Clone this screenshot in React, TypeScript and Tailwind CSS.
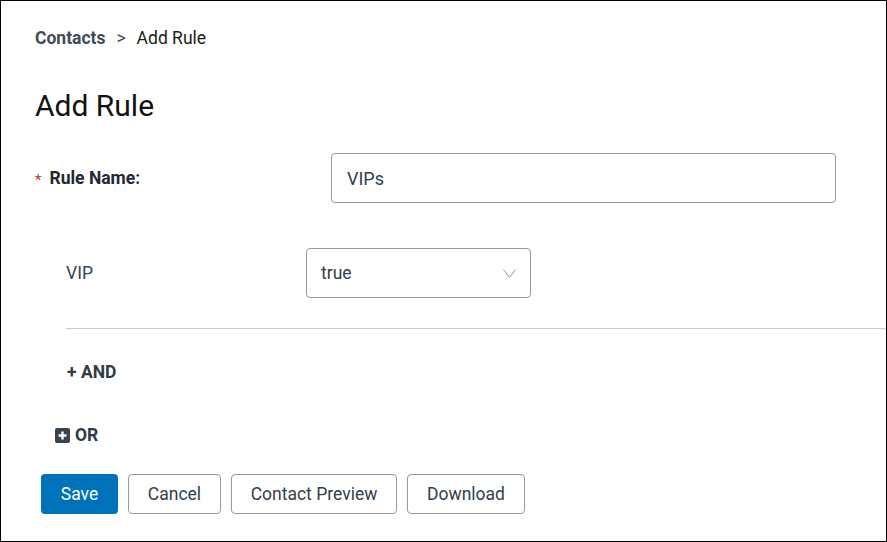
import React from 'react';

const font = { fontFamily: 'Roboto, "Liberation Sans", sans-serif' };

const PlusSquare = () => (
  <svg width="15" height="15" viewBox="0 0 15 15" aria-hidden="true">
    <rect x="0" y="0" width="15" height="15" rx="2" fill="#37434d" />
    <path d="M7.5 3.5v8M3.5 7.5h8" stroke="#fff" strokeWidth="2.4" />
  </svg>
);

const Chevron = () => (
  <svg width="13" height="9" viewBox="0 0 13 9" aria-hidden="true">
    <path d="M0.5 0.5 6.5 8.5 12.5 0.5" fill="none" stroke="#8d9aa5" strokeWidth="1" />
  </svg>
);

export default function App() {
  return (
    <div className="w-[887px] h-[542px] overflow-hidden border border-black bg-white text-[#1f2a33]" style={font}>
      {/* Breadcrumb */}
      <div className="flex items-center pl-[34px] pt-[26px] text-[17.5px] leading-[22px]">
        <span className="font-bold text-[#3e4c57]">Contacts</span>
        <span className="mx-[11px] text-[#3e4c57]">&gt;</span>
        <span className="text-[#1b1b1b]">Add Rule</span>
      </div>

      <h1 className="pl-[34px] mt-[39px] text-[30px] leading-[36px] text-[#111]">Add Rule</h1>

      {/* Rule name */}
      <div className="flex items-center mt-[29px]">
        <div className="w-[330px] flex items-center pl-[34px]">
          <span className="text-[#d0312d] text-[15px] mr-[8px] mt-[4px]">*</span>
          <span className="text-[17.5px] font-bold text-[#1f2a33]">Rule Name:</span>
        </div>
        <div className="w-[505px] h-[50px] rounded-[4px] border border-[#8e9ba6] flex items-center px-[15px] text-[18px] text-[#33404a]">
          VIPs
        </div>
      </div>

      {/* Condition */}
      <div className="pl-[65px]">
        <div className="flex items-center mt-[45px]">
          <div className="w-[240px] text-[17.5px] text-[#3a4550]">VIP</div>
          <div className="w-[225px] h-[50px] rounded-[4px] border border-[#8e9ba6] flex items-center justify-between pl-[14px] pr-[14px] text-[17.5px] text-[#33404a]">
            <span>true</span>
            <Chevron />
          </div>
        </div>
        <div className="mt-[30px] h-px bg-[#c3cbd0]" />
        <div className="mt-[33px] text-[17.5px] leading-[20px] font-bold text-[#2f3b45] pl-[1px]">+ AND</div>
      </div>

      <div className="flex items-center gap-[5px] pl-[54px] mt-[43px] text-[17.5px] leading-[20px] font-bold text-[#2f3b45]">
        <PlusSquare />
        <span>OR</span>
      </div>

      {/* Actions */}
      <div className="flex gap-[10px] pl-[40px] mt-[29px] text-[17.5px]">
        <button className="h-[40px] w-[77px] rounded-[4px] bg-[#0072bb] text-white">Save</button>
        <button className="h-[40px] w-[93px] rounded-[4px] border border-[#8e9ba6] text-[#33404a]">Cancel</button>
        <button className="h-[40px] w-[166px] rounded-[4px] border border-[#8e9ba6] text-[#33404a]">Contact Preview</button>
        <button className="h-[40px] w-[118px] rounded-[4px] border border-[#8e9ba6] text-[#33404a]">Download</button>
      </div>
    </div>
  );
}
